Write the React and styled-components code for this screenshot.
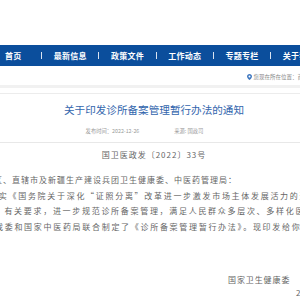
import React from 'react';
import styled, { createGlobalStyle } from 'styled-components';

//----------------------------------------
// Styled Components
//----------------------------------------

const GlobalStyle = createGlobalStyle`
  body {
    margin: 0;
    background: #ffffff;
    overflow: hidden;
  }
`;

const Page = styled.div`
  width: 300px;
  height: 300px;
  overflow: hidden;
  font-family: "Noto Sans CJK SC", "Noto Sans", sans-serif;
`;

const Header = styled.div`
  height: 45px;
  background: #ffffff;
`;

const Nav = styled.div`
  height: 21px;
  background: #0b4e9c;
  display: flex;
  align-items: center;
  padding-left: 5px;
  white-space: nowrap;
`;

const NavItem = styled.span`
  flex: none;
  width: ${({ $w }) => $w}px;
  color: #ffffff;
  font-size: 8px;
  font-weight: bold;
  letter-spacing: 0.25px;
  line-height: 21px;
`;

const NavSep = styled.span`
  flex: none;
  width: 1px;
  height: 7px;
  background: #d9e3f0;
  margin-right: 11.75px;
`;

const Location = styled.div`
  height: 19px;
  display: flex;
  align-items: center;
  padding-left: 247px;
  padding-top: 3px;
  box-sizing: border-box;
  white-space: nowrap;
  color: #8a8a8a;
  font-size: 5.5px;
`;

const Pin = styled.svg`
  flex: none;
  width: 5px;
  height: 6px;
  margin-right: 1.5px;
`;

const GrayStrip = styled.div`
  height: 3px;
  background: #f1f1f1;
`;

const Card = styled.div`
  margin-top: 5px;
  border-top: 1px solid #ececec;
`;

const TitleBlock = styled.div`
  padding: 6px 0 6px 8px;
  border-bottom: 1px solid #e8e8e8;
  text-align: center;
`;

const Title = styled.h1`
  margin: 0;
  font-size: 10.6px;
  line-height: 20px;
  font-weight: normal;
  color: #3366ad;
  white-space: nowrap;
`;

const Meta = styled.div`
  margin-top: 6px;
  padding-right: 19px;
  font-size: 5.3px;
  line-height: 10px;
  color: #9a9a9a;
  white-space: nowrap;
`;

const MetaSource = styled.span`
  margin-left: 35px;
`;

const DocNo = styled.div`
  margin-top: 6px;
  padding-left: 8px;
  text-align: center;
  font-size: 8px;
  line-height: 12px;
  letter-spacing: 1px;
  color: #666666;
  white-space: nowrap;
`;

const Body = styled.div`
  margin-top: 11px;
  color: #666666;
  font-size: 8px;
  line-height: 15.7px;
`;

const Line = styled.div`
  white-space: nowrap;
  margin-left: ${({ $shift }) => $shift}px;
  letter-spacing: ${({ $pitch }) => $pitch - 8}px;
`;

const Sign = styled.div`
  white-space: nowrap;
  padding-left: ${({ $left }) => $left}px;
  margin-top: ${({ $top }) => $top}px;
  font-size: 8px;
  line-height: 12px;
  letter-spacing: 0.9px;
  color: #666666;
`;

//----------------------------------------
// React Component
//----------------------------------------

const navItems = [
  { label: '首页', w: 36 },
  { label: '最新信息', w: 44.5 },
  { label: '政策文件', w: 44.5 },
  { label: '工作动态', w: 44.5 },
  { label: '专题专栏', w: 44.5 },
  { label: '关于我们', w: 44.5 },
];

const lines = [
  { text: '各省、自治区、直辖市及新疆生产建设兵团卫生健康委、中医药管理局：', shift: -51, pitch: 9 },
  { text: '为贯彻落实《国务院关于深化“证照分离”改革进一步激发市场主体发展活力的通知》', shift: -40, pitch: 9.7 },
  { text: '号）有关要求，进一步规范诊所备案管理，满足人民群众多层次、多样化医疗服务需求，', shift: -15, pitch: 9.7 },
  { text: '我委和国家中医药局联合制定了《诊所备案管理暂行办法》。现印发给你们，请遵照执行。', shift: -5, pitch: 9.7 },
];

const App = () => (
  <Page>
    <GlobalStyle />
    <Header />
    <Nav>
      {navItems.map((item, i) => (
        <React.Fragment key={item.label}>
          {i > 0 && <NavSep />}
          <NavItem $w={item.w}>{item.label}</NavItem>
        </React.Fragment>
      ))}
    </Nav>
    <Location>
      <Pin viewBox="0 0 10 12">
        <path d="M5 0C2.2 0 0 2.2 0 4.9 0 8.4 5 12 5 12s5-3.6 5-7.1C10 2.2 7.8 0 5 0zm0 6.8a2 2 0 1 1 0-4 2 2 0 0 1 0 4z" fill="#3f78c0" />
      </Pin>
      您现在所在位置：首页 &gt; 最新信息 &gt; 政策文件
    </Location>
    <GrayStrip />
    <Card>
      <TitleBlock>
        <Title>关于印发诊所备案管理暂行办法的通知</Title>
        <Meta>
          发布时间：2022-12-26
          <MetaSource>来源: 国政司</MetaSource>
        </Meta>
      </TitleBlock>
      <DocNo>国卫医政发〔2022〕33号</DocNo>
      <Body>
        {lines.map((l) => (
          <Line key={l.text} $shift={l.shift} $pitch={l.pitch}>{l.text}</Line>
        ))}
      </Body>
      <Sign $left={228} $top={39}>国家卫生健康委</Sign>
      <Sign $left={296} $top={1}>2022年12月23日</Sign>
    </Card>
  </Page>
);

export default App;
